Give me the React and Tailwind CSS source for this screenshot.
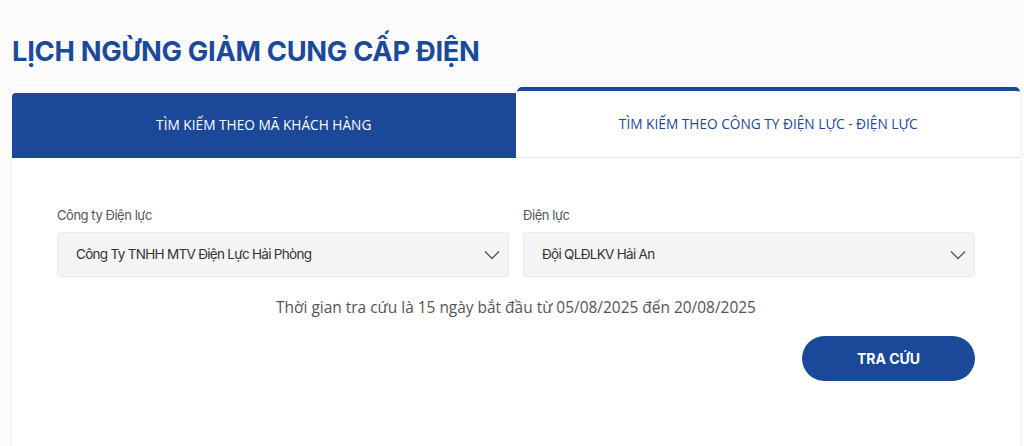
import React, { useState } from 'react';

const Chevron = () => (
  <svg width="16" height="10" viewBox="0 0 16 10" fill="none" className="shrink-0">
    <path d="M1 1.5L8 8.5L15 1.5" stroke="#555" strokeWidth="1.3" />
  </svg>
);

const SelectBox = ({ label, value }) => (
  <div className="flex-1">
    <div className="text-[13px] tracking-[-0.45px] text-[#555] mb-[9px] font-['Inter',sans-serif] leading-[16px]">{label}</div>
    <div className="h-[45px] bg-[#f5f5f5] border border-[#ececec] rounded-[3px] flex items-center justify-between pl-[18px] pr-[8px]">
      <span className="text-[13.5px] tracking-[-0.7px] text-[#333] font-['Inter',sans-serif]">{value}</span>
      <Chevron />
    </div>
  </div>
);

const App = () => {
  const [tab, setTab] = useState(1);

  return (
    <div className="min-h-[446px] bg-[#fbfbfb] pl-[12px] pr-[4px] pt-[34px]">
      <h1 className="text-[27.3px] font-bold text-[#1b4a9b] font-['Inter',sans-serif] leading-[36px] mb-[17px] tracking-[-0.3px]">
        LỊCH NGỪNG GIẢM CUNG CẤP ĐIỆN
      </h1>

      <div className="bg-white shadow-[0_0_4px_rgba(0,0,0,0.06)] rounded-t-[6px] min-h-[360px]">
        {/* Tabs */}
        <div className="flex items-end">
          <button
            onClick={() => setTab(0)}
            className="flex-1 h-[65px] bg-[#1b4899] rounded-tl-[4px] text-white text-[13.7px] font-['Open_Sans',sans-serif] border-b border-[#1b4899]"
          >
            TÌM KIẾM THEO MÃ KHÁCH HÀNG
          </button>
          <button
            onClick={() => setTab(1)}
            className="flex-1 h-[71px] bg-white border-t-4 border-[#1b4899] rounded-t-[5px] border-b border-b-[#e6e6e6] text-[#1b4899] text-[13.7px] font-['Open_Sans',sans-serif] ml-px"
          >
            TÌM KIẾM THEO CÔNG TY ĐIỆN LỰC - ĐIỆN LỰC
          </button>
        </div>

        {/* Form */}
        <div className="px-[45px] pt-[49px] pb-[40px]">
          <div className="flex gap-[14px]">
            <SelectBox label="Công ty Điện lực" value="Công Ty TNHH MTV Điện Lực Hải Phòng" />
            <SelectBox label="Điện lực" value="Đội QLĐLKV Hải An" />
          </div>
          <p className="text-center text-[15.45px] text-[#555] font-['Open_Sans',sans-serif] mt-[19px] leading-[22px]">
            Thời gian tra cứu là 15 ngày bắt đầu từ 05/08/2025 đến 20/08/2025
          </p>
          <div className="flex justify-end mt-[18px]">
            <button className="w-[173px] h-[45px] rounded-full bg-[#1b4899] text-white text-[14px] font-bold font-['Inter',sans-serif]">
              TRA CỨU
            </button>
          </div>
        </div>
      </div>
    </div>
  );
};

export default App;
